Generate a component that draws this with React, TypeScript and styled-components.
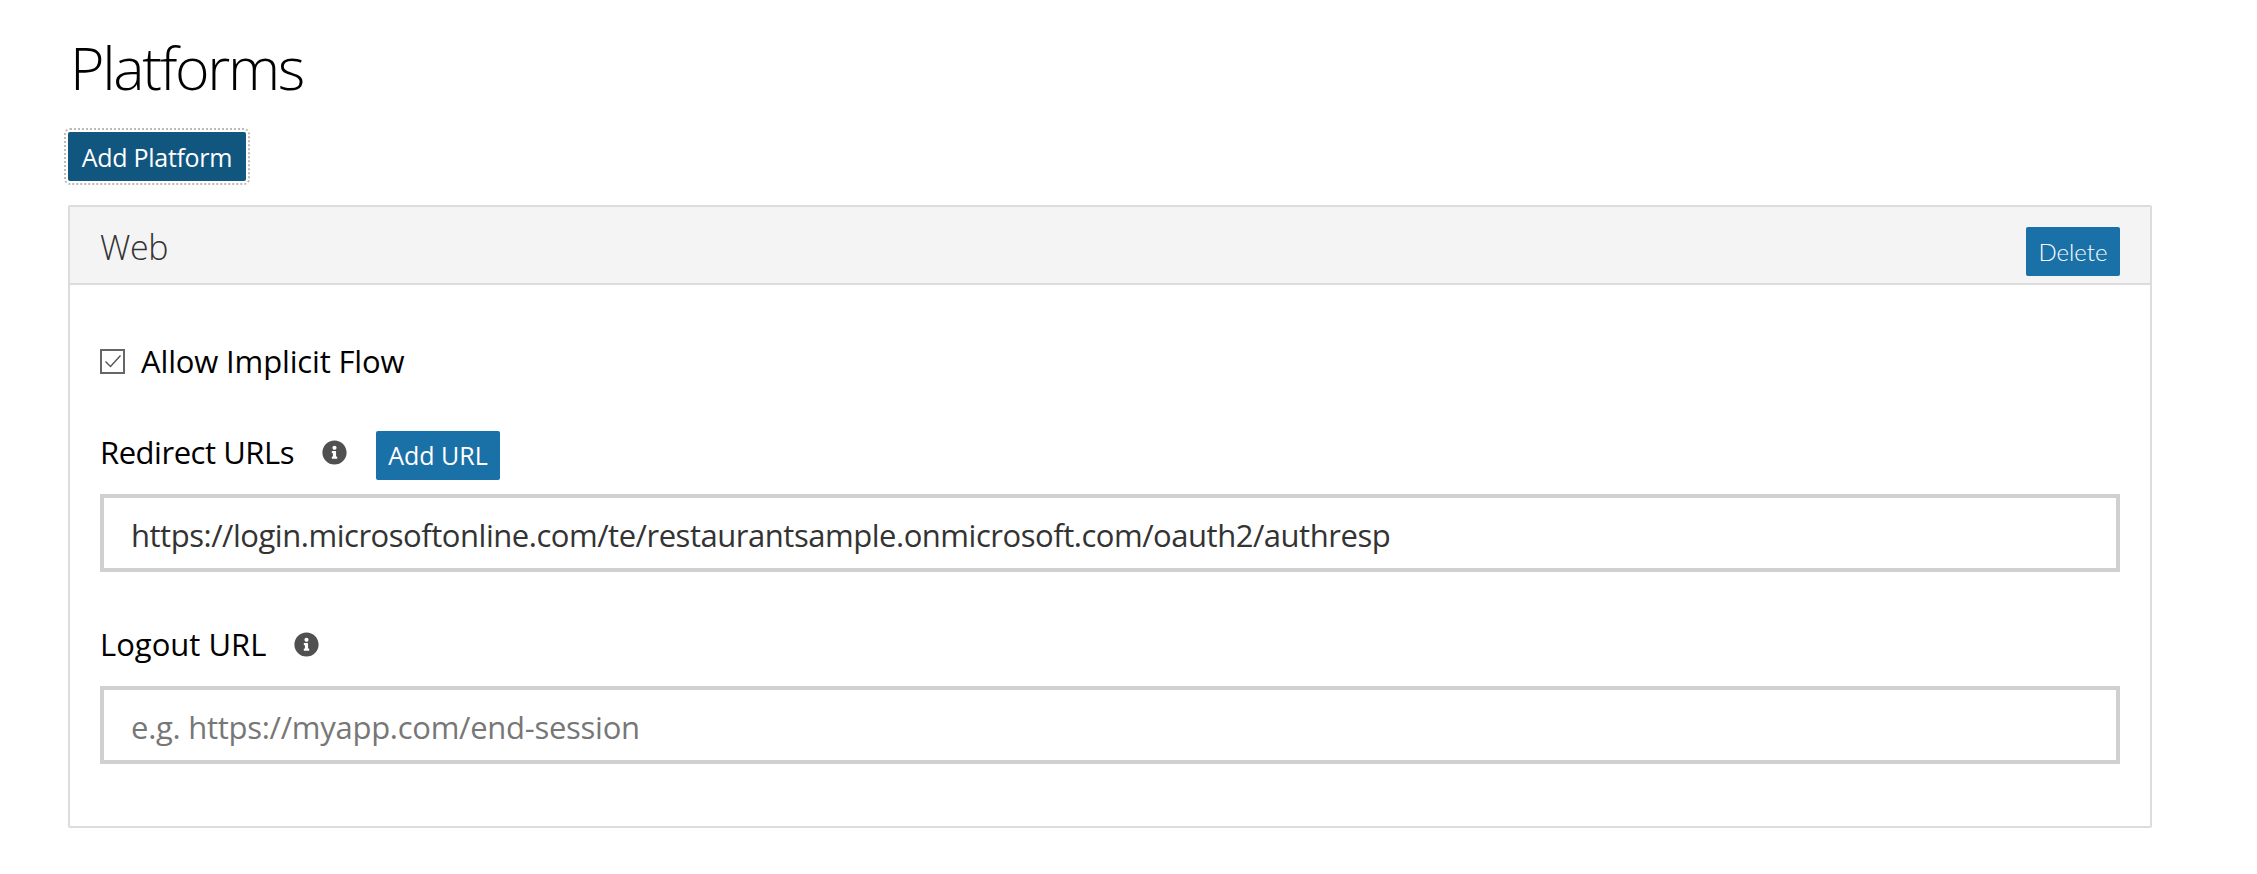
import React from 'react';
import styled, { createGlobalStyle } from 'styled-components';
import { FaInfoCircle } from 'react-icons/fa';

const GlobalStyle = createGlobalStyle`
  html, body {
    margin: 0;
    background: #fff;
    color: #000;
    font-family: 'Open Sans', 'Noto Sans', sans-serif;
  }
  * {
    box-sizing: border-box;
  }
`;

const Page = styled.div`
  width: 2257px;
  height: 874px;
  padding: 26px 105px 0 68px;
  overflow: hidden;
`;

const Title = styled.h1`
  margin: 0 0 24px 2px;
  font-size: 59px;
  line-height: 82px;
  font-weight: 300;
  letter-spacing: -2.3px;
`;

const Button = styled.button<{ $dark?: boolean }>`
  border: none;
  border-radius: 2px;
  padding: 0;
  height: 49px;
  color: #fff;
  background: ${(p) => (p.$dark ? '#10567f' : '#1a71a8')};
  font-family: inherit;
  font-size: 25px;
`;

const AddPlatform = styled(Button)`
  display: block;
  width: 178px;
  outline: 2px dotted #bbb;
  outline-offset: 2px;
  margin-bottom: 24px;
  letter-spacing: -0.3px;
`;

const AddUrl = styled(Button)`
  width: 124px;
  margin-left: 29px;
  padding-bottom: 2px;
  align-self: flex-start;
`;

const DeleteButton = styled(Button)`
  width: 94px;
  font-size: 24px;
  font-family: 'Lato', sans-serif;
  font-weight: 300;
`;

const Card = styled.section`
  height: 623px;
  border: 2px solid #dcdcdc;
  border-radius: 2px;
`;

const CardHeader = styled.header`
  height: 78px;
  padding: 20px 30px 0 30px;
  display: flex;
  justify-content: space-between;
  align-items: flex-start;
  background: #f4f4f4;
  border-bottom: 2px solid #dcdcdc;
`;

const CardTitle = styled.h2`
  margin: -3px 0 0;
  font-size: 34px;
  line-height: 46px;
  font-weight: 300;
  color: #333;
  letter-spacing: -0.4px;
`;

const CardBody = styled.div`
  padding: 56px 30px 0 30px;
`;

const CheckRow = styled.label`
  display: flex;
  align-items: center;
  gap: 16px;
  height: 40px;
  margin-bottom: 50px;
  font-size: 31px;
  letter-spacing: -0.15px;
`;

const CheckBox = styled.span`
  width: 25px;
  height: 25px;
  display: flex;
  align-items: center;
  justify-content: center;
  border: 2px solid #666;
`;

const LabelRow = styled.div<{ $spacing: number }>`
  display: flex;
  align-items: center;
  height: 49px;
  padding-bottom: 8px;
  margin-bottom: 14px;
  font-size: 31px;
  letter-spacing: ${(p) => p.$spacing}px;
`;

const InfoIcon = styled(FaInfoCircle)`
  width: 25px;
  height: 25px;
  margin-top: 2px;
  color: #505050;
  margin-left: 28px;
`;

const UrlInput = styled.input`
  display: block;
  width: 100%;
  height: 78px;
  padding: 3px 27px 0;
  margin-bottom: 51px;
  border: 4px solid #d0d0d0;
  outline: none;
  color: #333;
  background: #fff;
  font-family: inherit;
  font-size: 31px;
  letter-spacing: -0.47px;

  &::placeholder {
    color: #777;
    opacity: 1;
    letter-spacing: -0.27px;
  }
`;

export default function App() {
  return (
    <Page>
      <GlobalStyle />
      <Title>Platforms</Title>
      <AddPlatform $dark>Add Platform</AddPlatform>
      <Card>
        <CardHeader>
          <CardTitle>Web</CardTitle>
          <DeleteButton>Delete</DeleteButton>
        </CardHeader>
        <CardBody>
          <CheckRow>
            <CheckBox>
              <svg width="18" height="14" viewBox="0 0 18 14" fill="none">
                <path d="M1.5 7.5 L6.5 12.5 L16.5 1.5" stroke="#555" strokeWidth="1.4" />
              </svg>
            </CheckBox>
            Allow Implicit Flow
          </CheckRow>
          <LabelRow $spacing={-0.47}>
            Redirect URLs
            <InfoIcon />
            <AddUrl>Add URL</AddUrl>
          </LabelRow>
          <UrlInput
            readOnly
            value="https://login.microsoftonline.com/te/restaurantsample.onmicrosoft.com/oauth2/authresp"
          />
          <LabelRow $spacing={0}>
            Logout URL
            <InfoIcon />
          </LabelRow>
          <UrlInput placeholder="e.g. https://myapp.com/end-session" />
        </CardBody>
      </Card>
    </Page>
  );
}
